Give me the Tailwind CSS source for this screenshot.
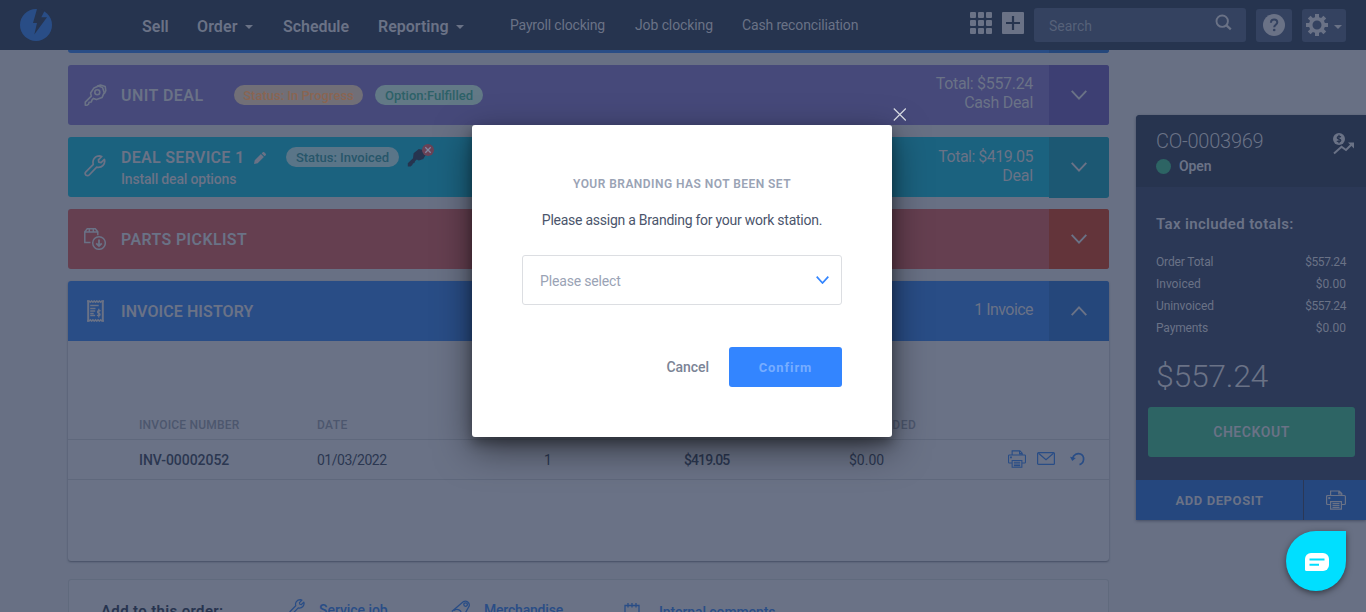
<!DOCTYPE html>
<html lang="en">
<head>
<meta charset="utf-8">
<title>Order CO-0003969</title>
<script src="https://cdn.jsdelivr.net/npm/@tailwindcss/browser@4"></script>
</head>
<body class="h-[612px] overflow-hidden bg-[#687084] font-[Roboto,sans-serif] text-[#6a7286]">
<svg class="hidden">
  <symbol id="down" viewBox="0 0 16 10"><path d="M.7.9 8 8.600 15.300.9" fill="none" stroke="currentColor" stroke-width="1.9"/></symbol>
  <symbol id="printer" viewBox="0 0 20 20"><g fill="none" stroke="currentColor" stroke-width="1.2"><path d="M4.6 5.500V1h8.600l2.600 2.500v2M12.800 1v3h3M4 14.500H1.600a1 1 0 0 1-1-1v-7a1 1 0 0 1 1-1h16.800a1 1 0 0 1 1 1v7a1 1 0 0 1-1 1H16M4.600 11.600h10.800v7.600H4.600zM6.500 13.600h7M6.500 15.500h7M6.500 17.400h7"/><path d="M2.300 8.100h2" stroke-width="2"/></g></symbol>
  <symbol id="wrench" viewBox="0 0 22 22"><path d="M1.900 20.100a2.300 2.300 0 0 1 0-3.200l7.400-7.600C8 5 10.800 1 15.600.9l2.200.6-3.400 3.400.4 2.300 2.300.4 3.300-3.300c1.400 4.400-2.400 9.100-7.700 7.900l-7.500 7.800a2.300 2.300 0 0 1-3.300 0z" fill="none" stroke="currentColor" stroke-width="1.700" stroke-linejoin="round"/></symbol>
</svg>

<header class="flex h-[50px] bg-[#26344f]">
  <div class="w-[141px] pl-5 pt-[9px]">
    <svg class="size-8" viewBox="0 0 32 32"><circle cx="16" cy="16" r="16" fill="#294d86"/><path d="M17 0 13 14h4l-2.700 11.500L27 8.300h-5.700L24.500 2 20-1z" fill="#26344f"/></svg>
  </div>
  <nav class="flex pt-[3px] text-base font-semibold leading-[47px]">
    <span class="w-14 pl-px">Sell</span>
    <span class="flex w-[86px] items-center gap-[7px] tracking-[0.1px]">Order<svg class="h-1 w-2" viewBox="0 0 8 4"><path d="M0 0h8L4 4z" fill="currentColor"/></svg></span>
    <span class="w-[95px] tracking-[-0.05px]">Schedule</span>
    <span class="flex w-[132px] items-center gap-[7px]">Reporting<svg class="h-1 w-2" viewBox="0 0 8 4"><path d="M0 0h8L4 4z" fill="currentColor"/></svg></span>
  </nav>
  <nav class="flex text-sm leading-[51px]">
    <span class="w-[125px] tracking-[-0.18px]">Payroll clocking</span>
    <span class="w-[107px] tracking-[-0.1px]">Job clocking</span>
    <span class="tracking-[-0.15px]">Cash reconciliation</span>
  </nav>
  <div class="ml-auto flex pr-5 pt-2">
    <svg class="mr-2.5 mt-1 size-[22px]" viewBox="0 0 22 22" fill="currentColor"><rect width="6" height="6" rx="1"/><rect x="8" width="6" height="6" rx="1"/><rect x="16" width="6" height="6" rx="1"/><rect y="8" width="6" height="6" rx="1"/><rect x="8" y="8" width="6" height="6" rx="1"/><rect x="16" y="8" width="6" height="6" rx="1"/><rect y="16" width="6" height="6" rx="1"/><rect x="8" y="16" width="6" height="6" rx="1"/><rect x="16" y="16" width="6" height="6" rx="1"/></svg>
    <svg class="mr-2.5 mt-1 size-[22px]" viewBox="0 0 22 22"><rect width="22" height="22" rx="1" fill="#6a7286"/><path d="M11 4v14M4 11h14" stroke="#26344f" stroke-width="2.200"/></svg>
    <div class="mr-2.5 flex h-[34px] w-[212px] justify-between rounded-[3px] bg-[#344260] pl-[15px] pr-[14px]">
      <span class="pt-[2px] text-sm leading-[33px] text-[#566179]">Search</span>
      <svg class="mt-[6px] size-[17px]" viewBox="0 0 17 17"><circle cx="7.200" cy="7.200" r="5.700" fill="none" stroke="currentColor" stroke-width="1.900"/><path d="m11.200 11.200 4.600 4.200" stroke="currentColor" stroke-width="2.300"/></svg>
    </div>
    <div class="mr-2.5 mt-px flex h-[33px] w-9 justify-center rounded-[3px] bg-[#344260] pt-[5px]">
      <svg class="size-[22px]" viewBox="0 0 22 22"><circle cx="11" cy="11" r="11" fill="#6a7286"/><path d="M7.900 8.700c0-2 1.300-3.200 3.200-3.200s3.200 1.200 3.200 2.800c0 2.500-3.100 2.400-3.100 5" fill="none" stroke="#344260" stroke-width="2"/><circle cx="11.200" cy="16" r="1.300" fill="#344260"/></svg>
    </div>
    <div class="mt-px flex h-[33px] w-11 rounded-[3px] bg-[#344260] pl-1 pt-[5px]">
      <svg class="size-[22px]" viewBox="-11 -11 22 22" stroke="currentColor"><circle r="6.300" fill="none" stroke-width="3.600"/><path d="M0-11v4M0 7v4M-11 0h4M7 0h4M-7.800-7.800l3 3M4.800 4.800l3 3M-7.800 7.800l3-3M4.800-4.800l3-3" stroke-width="4"/></svg>
      <svg class="ml-1.5 mt-[11px] h-1 w-2" viewBox="0 0 8 4"><path d="M0 0h8L4 4z" fill="currentColor"/></svg>
    </div>
  </div>
</header>

<div class="flex h-[562px] overflow-hidden pl-[68px]">
  <main class="w-[1041px] shrink-0">
    <div class="mb-3 flex h-[3px] overflow-hidden rounded-b-[3px] bg-[#294d86]"><i class="ml-auto w-[60px] bg-[#25477b]"></i></div>

    <section class="mb-3 flex h-[60px] overflow-hidden rounded-[3px] bg-[#46497a]">
      <div class="w-[53px] pl-4 pt-[19px]"><svg class="size-[23px]" viewBox="0 0 23 23" fill="none" stroke="currentColor" stroke-width="1.600" stroke-linejoin="round"><path d="M10 3.900 14.500 2l4 1.600 1.700 5-2.200 5-5.500 2-3-1.200-1.500 1.500-.7 2.100-2.200.3-.5 1.800-1.800 1.200H1.300v-3.200l6-6L6.600 9z"/><path d="m13 2.300 3.500-1.200 4.700 1.500.6 4-1.600 3.200"/><circle cx="13.300" cy="8.300" r="2.500"/></svg></div>
      <h2 class="w-[113px] text-base font-semibold leading-[61px] tracking-[0.47px]">UNIT DEAL</h2>
      <div class="flex gap-3 pt-5 text-[13px] font-medium leading-5">
        <span class="h-5 w-[129px] rounded-full bg-[#716f77] text-center leading-[21px] text-[#8a6552]">Status: In Progress</span>
        <span class="h-5 w-[108px] rounded-full bg-[#627986] text-center leading-[21px] text-[#2d6168]">Option:Fulfilled</span>
      </div>
      <div class="ml-auto pr-4 pt-[9px] text-right text-base leading-[19px] tracking-[-0.32px]">Total: $557.24<br>Cash Deal</div>
      <div class="flex w-[60px] items-center justify-center bg-[#3d3f73]"><svg class="h-[10px] w-4"><use href="#down"/></svg></div>
    </section>

    <section class="mb-3 flex h-[60px] rounded-[3px] bg-[#1b627f]">
      <div class="w-[53px] pl-4 pt-[18px]"><svg class="size-[22px]"><use href="#wrench"/></svg></div>
      <div class="w-[133px] pt-[10px]">
        <h2 class="text-base font-semibold leading-[22px] tracking-[0.3px]">DEAL SERVICE 1</h2>
        <p class="text-sm font-medium leading-[21px] tracking-[-0.18px]">Install deal options</p>
      </div>
      <svg class="mr-5 mt-[15px] size-3" viewBox="0 0 13 13" fill="currentColor"><path d="M0 13l.8-4L7.500 2.300l3.200 3.200L4 12.200zM8.300 1.500 9.500.3a1.200 1.200 0 0 1 1.600 0l1.600 1.600a1.200 1.200 0 0 1 0 1.600l-1.200 1.200z"/></svg>
      <span class="mr-2 mt-2.5 h-5 w-[113px] rounded-full bg-[#5a7588] text-center text-[13px] font-medium leading-[21px] text-[#27566a]">Status: Invoiced</span>
      <svg class="mt-[6px] h-6 w-[28px]" viewBox="0 0 28 24"><path d="m6.600 10.300 5.200-4.200 4.500.8 2.500 4.800-2.500 4.200-4.500 1.600-2-1-1.800 1.800-.6 1.700-1.500.5-.6 1.500-1.800 1.500H.8v-3.200l5.200-5z" fill="#26344f"/><circle cx="21" cy="7" r="6" fill="#6a4256"/><path d="m18.300 4.300 5.400 5.400m0-5.400-5.400 5.400" stroke="#8088a0" stroke-width="1.300"/></svg>
      <div class="ml-auto pr-4 pt-[10px] text-right text-base leading-[19px] tracking-[-0.5px]">Total: $419.05<br><span class="tracking-[-0.2px]">Deal</span></div>
      <div class="flex h-[61px] w-[60px] items-center justify-center rounded-r-[3px] bg-[#1c5873] pb-px"><svg class="h-[10px] w-4"><use href="#down"/></svg></div>
    </section>

    <section class="mb-3 flex h-[60px] overflow-hidden rounded-[3px] bg-[#653f50]">
      <div class="w-[53px] pl-4 pt-[19px]"><svg class="size-[22px]" viewBox="0 0 22 22" fill="none" stroke="currentColor" stroke-width="1.500"><path d="M6.500 14.500H.8V3.800L3.300.7h8l2.500 3.100v3.500M.8 3.900h13M5.300 1v2.900M9.300 1v2.900"/><circle cx="15" cy="15" r="6.300"/><path d="M15 11.500v6.300M12.200 15.300l2.800 2.700 2.800-2.700" stroke-width="1.800"/></svg></div>
      <h2 class="text-base font-semibold leading-[61px] tracking-[0.36px]">PARTS PICKLIST</h2>
      <div class="ml-auto flex w-[60px] items-center justify-center bg-[#63343a]"><svg class="h-[10px] w-4"><use href="#down"/></svg></div>
    </section>

    <section class="mb-[18px] h-[280px] overflow-hidden rounded-[3px] bg-[#6a7286] shadow-[0_1px_2px_#454e63]">
      <div class="flex h-[60px] bg-[#294d86]">
        <div class="w-[53px] pl-[19px] pt-[19px]"><svg class="h-[22px] w-[17px]" viewBox="0 0 17 22" fill="none" stroke="currentColor"><path d="M1.200.5v21M15.800.5v21" stroke-width="2"/><path d="M0 1h2l1.300 1.200L4.600 1l1.300 1.200L7.200 1l1.300 1.200L9.800 1l1.300 1.200L12.400 1l1.300 1.200L15 1h2M0 21h2l1.300-1.200L4.600 21l1.300-1.200L7.200 21l1.300-1.200L9.800 21l1.300-1.200 1.300 1.200 1.300-1.200L15 21h2" stroke-width="1.600"/><path d="M3.200 5.500h8.500M3.200 8.500h5.300M3.200 11h5M3.200 13.500h3.500M3.200 15.500h5M13.600 10.900c-3-1.200-4 1.700-2 2.300s2.500 2.900-1.700 2.200M11.800 8.800v8.700" stroke-width="1.400"/></svg></div>
        <h2 class="text-base font-semibold leading-[61px] tracking-[0.08px]">INVOICE HISTORY</h2>
        <span class="ml-auto pr-4 text-base leading-[57px] tracking-[-0.55px]">1 Invoice</span>
        <div class="flex w-[60px] items-center justify-center bg-[#25477b]"><svg class="h-[10px] w-4 rotate-180"><use href="#down"/></svg></div>
      </div>
      <div class="mt-[69px] grid h-[30px] grid-cols-[178px_463px_1fr] border-b border-[#5f687c] pl-[71px] text-xs font-medium leading-[31px] tracking-[0.2px] text-[#4d576e]">
        <span>INVOICE NUMBER</span><span class="tracking-[0.4px]">DATE</span><span class="pl-[72px] tracking-[0.6px]">REFUNDED</span>
      </div>
      <div class="grid h-10 grid-cols-[178px_227px_140px_165px_159px_29px_33px_1fr] border-b border-[#5f687c] pl-[71px] text-sm leading-[41px] text-[#2b3751]">
        <span class="font-medium tracking-[-0.05px]">INV-00002052</span>
        <span class="tracking-[-0.5px]">01/03/2022</span>
        <span>1</span>
        <span class="font-medium tracking-[-0.9px]">$419.05</span>
        <span>$0.00</span>
        <svg class="mt-[10px] size-[18px] text-[#294d86]"><use href="#printer"/></svg>
        <svg class="mt-3 h-[13px] w-[18px] text-[#294d86]" viewBox="0 0 18 13" fill="none" stroke="currentColor" stroke-width="1.200"><rect x=".6" y=".6" width="16.800" height="11.800" rx="1"/><path d="m1.500 1.300 7.500 6.500 7.500-6.500"/></svg>
        <svg class="mt-3 h-[14px] w-[15px] text-[#294d86]" viewBox="0 0 15 14"><path d="M2.500 6.500C3.500 2.500 7.500.8 10.500 2c4.500 2 4 9-1 10.600" fill="none" stroke="currentColor" stroke-width="1.700"/><path d="M0 4.800 2.300 9 5.800 6z" fill="currentColor"/></svg>
      </div>
    </section>

    <section class="flex h-20 rounded-[3px] border border-[#606a7d] bg-[#6a7286] pl-8 text-sm font-medium text-[#294d86]">
      <h3 class="w-[188px] pt-[20px] text-[15px] font-semibold leading-[22px] tracking-[0.35px] text-[#27344f]">Add to this order:</h3>
      <svg class="mr-3.5 mt-[19px] size-4"><use href="#wrench"/></svg>
      <span class="w-[132px] pt-5 leading-5 tracking-[-0.05px]">Service job</span>
      <svg class="mr-3.5 mt-[20px] size-[19px]" viewBox="0 0 19 19" fill="none" stroke="currentColor" stroke-width="1.300"><path d="M.8 11.500 12.500 1.600a4 4 0 0 1 5.700 4.500L12 17"/><circle cx="14.600" cy="4.600" r="1.800"/><path d="M3 10.500c3-2.500 8-.5 7 3.500"/></svg>
      <span class="w-[140px] pt-5 leading-5 tracking-[-0.2px]">Merchandise</span>
      <svg class="mr-[19px] mt-[23px] h-[17px] w-4" viewBox="0 0 16 17" fill="none" stroke="currentColor" stroke-width="1.300"><path d="M1 17V2.500h14V17M4 0v4.500M8 0v4.500M12 0v4.500"/></svg>
      <span class="pt-[22px] leading-5 tracking-[-0.1px]">Internal comments</span>
    </section>
  </main>

  <aside class="ml-[27px] mt-[65px] h-[405px] w-[230px] shrink-0 rounded-tl-[4px] bg-[#2b3856] shadow-[0_1px_3px_#454e63]">
    <div class="flex h-[72px] justify-between rounded-tl-[4px] bg-[#27344f] pl-5 pr-3">
      <div>
        <div class="pt-4 text-xl font-light leading-[21px] tracking-[-0.25px]">CO-0003969</div>
        <div class="flex items-center gap-2 pt-[4px] text-sm font-semibold leading-5 tracking-[-0.1px]"><i class="size-[15px] rounded-full bg-[#2d6464]"></i>Open</div>
      </div>
      <svg class="mt-[18px] h-[22px] w-[21px]" viewBox="0 0 21 22"><circle cx="6" cy="6" r="6" fill="#6a7286"/><path d="M8 3.900C5.500 2.700 4 4 4.300 5s3.700 1 3.500 2.400-2.300 1.600-4 .5M6 1.800v8.400" fill="none" stroke="#27344f" stroke-width="1.200"/><path d="m1 20.500 7.500-6.800 4.500 3.300 6-6" fill="none" stroke="#6a7286" stroke-width="2"/><path d="M15 9.500h6v6z" fill="#6a7286"/></svg>
    </div>
    <div class="px-5 pt-[26px]">
      <h3 class="text-[15px] font-semibold leading-[22px] tracking-[0.35px]">Tax included totals:</h3>
      <dl class="mt-4 grid grid-cols-[1fr_auto] text-xs leading-[22px]">
        <dt class="tracking-[-0.15px]">Order Total</dt><dd class="text-right tracking-[-0.4px]">$557.24</dd>
        <dt>Invoiced</dt><dd class="text-right">$0.00</dd>
        <dt class="tracking-[-0.1px]">Uninvoiced</dt><dd class="text-right tracking-[-0.4px]">$557.24</dd>
        <dt class="tracking-[-0.15px]">Payments</dt><dd class="text-right">$0.00</dd>
      </dl>
      <div class="pt-[17px] text-[32px] font-light leading-10 tracking-[-0.3px]">$557.24</div>
    </div>
    <div class="ml-3 mt-[11px] h-[50px] w-[207px] rounded-[3px] bg-[#2d6464] text-center text-sm font-semibold leading-[50px] tracking-[0.55px]">CHECKOUT</div>
    <div class="mt-[23px] flex h-10 bg-[#25477e]">
      <span class="w-[168px] border-r border-[#2b3856] text-center text-[13px] font-bold leading-[41px] tracking-[0.6px]">ADD DEPOSIT</span>
      <svg class="ml-[22px] mt-[10px] size-5"><use href="#printer"/></svg>
    </div>
  </aside>
</div>

<div class="absolute left-[472px] top-[125px] h-[312px] w-[420px] rounded-[3px] bg-white px-[50px] shadow-[0_12px_36px_rgba(0,0,0,0.5),0_6px_12px_rgba(0,0,0,0.3)]">
  <svg class="absolute -right-[14px] -top-[17px] size-[13px]" viewBox="0 0 13 13"><path d="m.8.500 12 12m0-12-12 12" stroke="#d5d8e0" stroke-width="1.200"/></svg>
  <h1 class="pt-[49px] text-center text-xs font-semibold leading-5 tracking-[0.46px] text-[#9aa3b5]">YOUR BRANDING HAS NOT BEEN SET</h1>
  <p class="pt-4 text-center text-sm leading-5 tracking-[-0.25px] text-[#4b556c]">Please assign a Branding for your work station.</p>
  <div class="mt-[25px] flex h-[50px] items-center justify-between rounded-[3px] border border-[#dcdee2] pl-[17px] pr-3 text-sm tracking-[-0.16px] text-[#9aa3b5]">
    <span class="pt-px">Please select</span>
    <svg class="h-2 w-[13px] text-[#3385ff]" viewBox="0 0 13 8"><path d="m.7.700 5.800 6.300L12.300.7" fill="none" stroke="currentColor" stroke-width="1.700"/></svg>
  </div>
  <div class="mt-[42px] flex items-center justify-end gap-5">
    <span class="text-sm font-medium tracking-[-0.05px] text-[#7b8496]">Cancel</span>
    <span class="h-10 w-[113px] rounded-[3px] bg-[#3385ff] text-center text-[13px] font-bold leading-[41px] tracking-[0.9px] text-[#77adff]">Confirm</span>
  </div>
</div>

<div class="absolute left-[1286px] top-[531px] flex size-[60px] items-center justify-center rounded-full rounded-tr-[8px] bg-[#00dfff] shadow-[0_2px_6px_rgba(0,0,0,0.5)]">
  <svg class="ml-0.5 mt-0.5 h-[18px] w-6" viewBox="0 0 24 18"><path d="M6 0h12a6 6 0 0 1 6 6v6a6 6 0 0 1-6 6H1.500A1.500 1.500 0 0 1 0 16.500V6a6 6 0 0 1 6-6z" fill="#fff"/><path d="M4.500 6.500h15M4.500 11.700h9.500" stroke="#00dfff" stroke-width="2"/></svg>
</div>
</body>
</html>
